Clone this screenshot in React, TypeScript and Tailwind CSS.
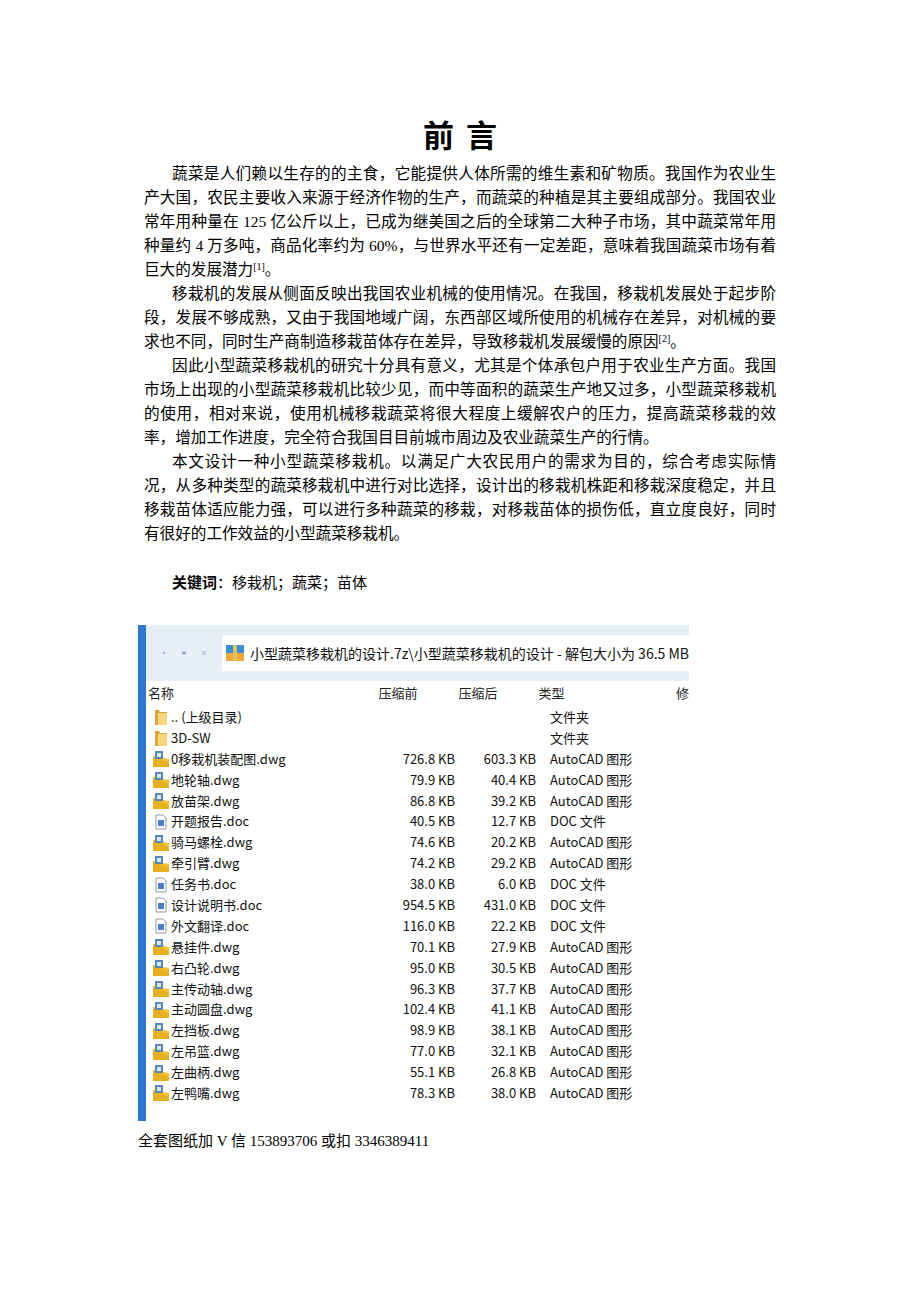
const rows: [string, string, string, string, string][] = [
  ['dwg', '0移栽机装配图.dwg', '726.8 KB', '603.3 KB', 'AutoCAD 图形'],
  ['dwg', '地轮轴.dwg', '79.9 KB', '40.4 KB', 'AutoCAD 图形'],
  ['dwg', '放苗架.dwg', '86.8 KB', '39.2 KB', 'AutoCAD 图形'],
  ['doc', '开题报告.doc', '40.5 KB', '12.7 KB', 'DOC 文件'],
  ['dwg', '骑马螺栓.dwg', '74.6 KB', '20.2 KB', 'AutoCAD 图形'],
  ['dwg', '牵引臂.dwg', '74.2 KB', '29.2 KB', 'AutoCAD 图形'],
  ['doc', '任务书.doc', '38.0 KB', '6.0 KB', 'DOC 文件'],
  ['doc', '设计说明书.doc', '954.5 KB', '431.0 KB', 'DOC 文件'],
  ['doc', '外文翻译.doc', '116.0 KB', '22.2 KB', 'DOC 文件'],
  ['dwg', '悬挂件.dwg', '70.1 KB', '27.9 KB', 'AutoCAD 图形'],
  ['dwg', '右凸轮.dwg', '95.0 KB', '30.5 KB', 'AutoCAD 图形'],
  ['dwg', '主传动轴.dwg', '96.3 KB', '37.7 KB', 'AutoCAD 图形'],
  ['dwg', '主动圆盘.dwg', '102.4 KB', '41.1 KB', 'AutoCAD 图形'],
  ['dwg', '左挡板.dwg', '98.9 KB', '38.1 KB', 'AutoCAD 图形'],
  ['dwg', '左吊篮.dwg', '77.0 KB', '32.1 KB', 'AutoCAD 图形'],
  ['dwg', '左曲柄.dwg', '55.1 KB', '26.8 KB', 'AutoCAD 图形'],
  ['dwg', '左鸭嘴.dwg', '78.3 KB', '38.0 KB', 'AutoCAD 图形'],
];

function Icon({ kind }: { kind: string }) {
  if (kind === 'folder')
    return (
      <svg width="16" height="18" viewBox="0 0 16 18">
        <path d="M2 2h4l1 2h7v13H2z" fill="#d9a53c" />
        <path d="M5 5h9v12H5z" fill="#f6d77c" />
      </svg>
    );
  if (kind === 'doc')
    return (
      <svg width="16" height="16" viewBox="0 0 16 16">
        <path d="M3 1h7l3 3v11H3z" fill="#fff" stroke="#8a9bb0" />
        <rect x="5" y="6" width="6" height="6" fill="#4a7fc8" />
      </svg>
    );
  return (
    <svg width="18" height="18" viewBox="0 0 18 18">
      <path d="M1 6l8 9h8V9z" fill="#f2c335" />
      <path d="M1 17h16v-4L1 6z" fill="#e6b020" />
      <rect x="3" y="1" width="8" height="8" fill="#5a86b8" />
      <path d="M5 3h4v4H5z" fill="#dbe7f4" />
    </svg>
  );
}

const P = 'indent-[28px] text-justify';
const Sup = ({ n }: { n: number }) => <span className="relative -top-[5px] text-[10px] leading-none">[{n}]</span>;

export default function App() {
  return (
    <div className="w-[920px] h-[1302px] bg-white text-black" style={{ fontFamily: '"Liberation Serif","Noto Sans CJK SC",serif' }}>
      <div className="pt-[114px] pl-[144px] w-[776px]">
        <h1 className="text-center text-[31px] font-bold leading-[46px] tracking-[12px] pl-[12px]">前言</h1>
        <div className="text-[15.6px] leading-[24px] pt-[2px]">
          <p className={P}>蔬菜是人们赖以生存的的主食，它能提供人体所需的维生素和矿物质。我国作为农业生产大国，农民主要收入来源于经济作物的生产，而蔬菜的种植是其主要组成部分。我国农业常年用种量在 125 亿公斤以上，已成为继美国之后的全球第二大种子市场，其中蔬菜常年用种量约 4 万多吨，商品化率约为 60%，与世界水平还有一定差距，意味着我国蔬菜市场有着巨大的发展潜力<Sup n={1} />。</p>
          <p className={P}>移栽机的发展从侧面反映出我国农业机械的使用情况。在我国，移栽机发展处于起步阶段，发展不够成熟，又由于我国地域广阔，东西部区域所使用的机械存在差异，对机械的要求也不同，同时生产商制造移栽苗体存在差异，导致移栽机发展缓慢的原因<Sup n={2} />。</p>
          <p className={P}>因此小型蔬菜移栽机的研究十分具有意义，尤其是个体承包户用于农业生产方面。我国市场上出现的小型蔬菜移栽机比较少见，而中等面积的蔬菜生产地又过多，小型蔬菜移栽机的使用，相对来说，使用机械移栽蔬菜将很大程度上缓解农户的压力，提高蔬菜移栽的效率，增加工作进度，完全符合我国目目前城市周边及农业蔬菜生产的行情。</p>
          <p className={P}>本文设计一种小型蔬菜移栽机。以满足广大农民用户的需求为目的，综合考虑实际情况，从多种类型的蔬菜移栽机中进行对比选择，设计出的移栽机株距和移栽深度稳定，并且移栽苗体适应能力强，可以进行多种蔬菜的移栽，对移栽苗体的损伤低，直立度良好，同时有很好的工作效益的小型蔬菜移栽机。</p>
          <p className="mt-[24px] pl-[28px] text-[15px]"><b style={{ fontFamily: '"Noto Sans CJK SC",sans-serif' }}>关键词</b>：移栽机；蔬菜；苗体</p>
        </div>
      </div>
      <div className="mt-[30px] ml-[138px] w-[551px] h-[496px] flex overflow-hidden bg-white" style={{ fontFamily: '"Noto Sans CJK SC",sans-serif' }}>
        <div className="w-[8px] bg-[#2f78d0]" />
        <div className="flex-1 flex flex-col overflow-hidden">
          <div className="h-[56px] bg-[#e6eef8] flex items-center gap-4 pl-4">
            <svg width="18" height="18" viewBox="0 0 16 16"><path d="M8 2l6 6h-4v6H6V8H2z" fill="#7ea6d6" /></svg>
            <svg width="18" height="16" viewBox="0 0 16 14"><rect x="0.5" y="0.5" width="15" height="13" fill="#dce7f5" stroke="#6f95c6" /><rect x="3" y="3" width="10" height="8" fill="#7ea6d6" /></svg>
            <svg width="18" height="14" viewBox="0 0 18 14"><g fill="#6f95c6"><rect x="0" y="1" width="3" height="2" /><rect x="5" y="1" width="13" height="2" /><rect x="0" y="6" width="3" height="2" /><rect x="5" y="6" width="13" height="2" /><rect x="0" y="11" width="3" height="2" /><rect x="5" y="11" width="13" height="2" /></g></svg>
            <div className="flex-1 h-[36px] bg-white flex items-center gap-1.5 pl-1 whitespace-nowrap text-[14px] text-[#111]">
              <svg width="18" height="16" viewBox="0 0 18 16"><rect width="18" height="16" fill="#3a8fd8" /><rect x="0" y="8" width="18" height="8" fill="#f0a93a" /><rect x="7" y="0" width="4" height="16" fill="#e2c25a" /></svg>
              小型蔬菜移栽机的设计.7z\小型蔬菜移栽机的设计 - 解包大小为 36.5 MB
            </div>
          </div>
          <div className="h-[24px] flex items-center text-[13px] text-[#222] whitespace-nowrap">
            <span className="w-[235px] pl-[2px]">名称</span>
            <span className="w-[81px]">压缩前</span>
            <span className="w-[81px]">压缩后</span>
            <span className="w-[139px]">类型</span>
            <span>修</span>
          </div>
          <div className="pt-[2px] text-[13px] text-[#111] leading-[20.9px]">
            {[['folder', '.. (上级目录)'], ['folder', '3D-SW']].map(([k, n]) => (
              <div key={n} className="flex items-center h-[20.9px]">
                <span className="w-[25px] flex justify-center pl-[4px]"><Icon kind={k} /></span>
                <span className="w-[379px]">{n}</span>
                <span>文件夹</span>
              </div>
            ))}
            {rows.map(([k, n, a, b, t]) => (
              <div key={n} className="flex items-center h-[20.9px] whitespace-nowrap">
                <span className="w-[25px] flex justify-center pl-[4px]"><Icon kind={k} /></span>
                <span className="w-[195px]">{n}</span>
                <span className="w-[89px] text-right">{a}</span>
                <span className="w-[81px] text-right">{b}</span>
                <span className="pl-[14px]">{t}</span>
              </div>
            ))}
          </div>
        </div>
      </div>
      <div className="ml-[138px] mt-[10px] text-[15px] leading-[20px]">全套图纸加 V 信 153893706 或扣 3346389411</div>
    </div>
  );
}
